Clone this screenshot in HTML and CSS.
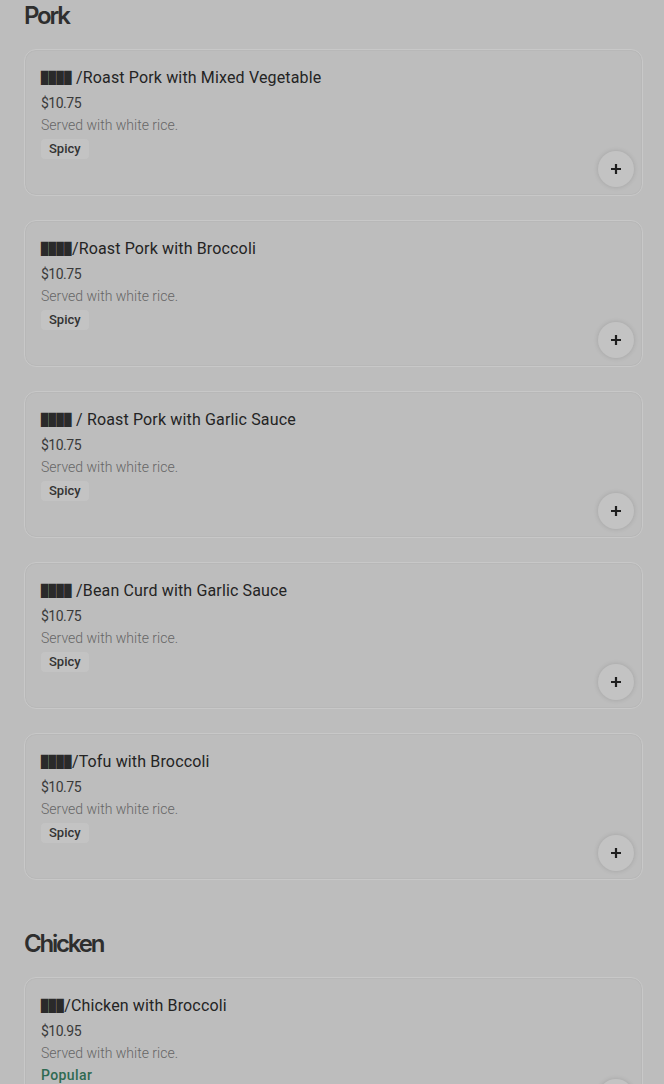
FILE: index.html
```html
<!DOCTYPE html>
<html lang="en">
<head>
<meta charset="utf-8">
<title>Menu</title>
<link rel="stylesheet" href="styles.css">
</head>
<body>
<main class="menu">
  <section class="category">
    <h2 class="category-title">Pork</h2>
    <div class="items">
      <article class="item">
        <div class="item-info">
          <h3 class="item-name"><span class="tofu">████</span> /Roast Pork with Mixed Vegetable</h3>
          <p class="item-price">$10.75</p>
          <p class="item-desc">Served with white rice.</p>
          <span class="tag">Spicy</span>
        </div>
        <button class="add-btn" aria-label="Add"><svg viewBox="0 0 12 12" width="12" height="12"><path d="M6 1v10M1 6h10" stroke="currentColor" stroke-width="2.2" fill="none"/></svg></button>
      </article>
      <article class="item">
        <div class="item-info">
          <h3 class="item-name"><span class="tofu">████</span>/Roast Pork with Broccoli</h3>
          <p class="item-price">$10.75</p>
          <p class="item-desc">Served with white rice.</p>
          <span class="tag">Spicy</span>
        </div>
        <button class="add-btn" aria-label="Add"><svg viewBox="0 0 12 12" width="12" height="12"><path d="M6 1v10M1 6h10" stroke="currentColor" stroke-width="2.2" fill="none"/></svg></button>
      </article>
      <article class="item">
        <div class="item-info">
          <h3 class="item-name"><span class="tofu">████</span> / Roast Pork with Garlic Sauce</h3>
          <p class="item-price">$10.75</p>
          <p class="item-desc">Served with white rice.</p>
          <span class="tag">Spicy</span>
        </div>
        <button class="add-btn" aria-label="Add"><svg viewBox="0 0 12 12" width="12" height="12"><path d="M6 1v10M1 6h10" stroke="currentColor" stroke-width="2.2" fill="none"/></svg></button>
      </article>
      <article class="item">
        <div class="item-info">
          <h3 class="item-name"><span class="tofu">████</span> /Bean Curd with Garlic Sauce</h3>
          <p class="item-price">$10.75</p>
          <p class="item-desc">Served with white rice.</p>
          <span class="tag">Spicy</span>
        </div>
        <button class="add-btn" aria-label="Add"><svg viewBox="0 0 12 12" width="12" height="12"><path d="M6 1v10M1 6h10" stroke="currentColor" stroke-width="2.2" fill="none"/></svg></button>
      </article>
      <article class="item">
        <div class="item-info">
          <h3 class="item-name"><span class="tofu">████</span>/Tofu with Broccoli</h3>
          <p class="item-price">$10.75</p>
          <p class="item-desc">Served with white rice.</p>
          <span class="tag">Spicy</span>
        </div>
        <button class="add-btn" aria-label="Add"><svg viewBox="0 0 12 12" width="12" height="12"><path d="M6 1v10M1 6h10" stroke="currentColor" stroke-width="2.2" fill="none"/></svg></button>
      </article>
    </div>
  </section>
  <section class="category">
    <h2 class="category-title">Chicken</h2>
    <div class="items">
      <article class="item">
        <div class="item-info">
          <h3 class="item-name"><span class="tofu">███</span>/Chicken with Broccoli</h3>
          <p class="item-price">$10.95</p>
          <p class="item-desc">Served with white rice.</p>
          <span class="popular">Popular</span>
        </div>
        <button class="add-btn" aria-label="Add"><svg viewBox="0 0 12 12" width="12" height="12"><path d="M6 1v10M1 6h10" stroke="currentColor" stroke-width="2.2" fill="none"/></svg></button>
      </article>
    </div>
  </section>
</main>
</body>
</html>
```

FILE: styles.css
```css
html, body {
  margin: 0;
  padding: 0;
  background: #bdbdbd;
  font-family: Roboto, "Liberation Sans", sans-serif;
  color: #2b2b2b;
}

.menu {
  display: flex;
  flex-direction: column;
  gap: 48px;
  padding: 0 21px 40px 24px;
}

.category-title {
  margin: 0 0 17px;
  font-family: Inter, Roboto, sans-serif;
  font-size: 24px;
  line-height: 32px;
  font-weight: 600;
  letter-spacing: -2.2px;
  color: #2e2e2e;
}

.items {
  display: flex;
  flex-direction: column;
  gap: 24px;
}

.item {
  box-sizing: border-box;
  min-height: 147px;
  display: grid;
  grid-template-columns: 1fr auto;
  padding: 16px 8px 8px 16px;
  border: 1px solid #c8c8c8;
  border-radius: 12px;
  box-shadow: inset 0 0 0 1px #b8b8b8;
  background: #bdbdbd;
}

.item-info {
  display: flex;
  flex-direction: column;
  align-items: flex-start;
}

.item-name {
  margin: 0;
  font-size: 16px;
  line-height: 24px;
  font-weight: 400;
  letter-spacing: 0.15px;
  color: #242424;
}

.tofu {
  font-family: "DejaVu Sans Mono", monospace;
  font-size: 12px;
  letter-spacing: 0.5px;
  color: #2a2a2a;
  vertical-align: 1px;
}

.item-price {
  margin: 3px 0 0;
  font-size: 14px;
  line-height: 20px;
  color: #3a3a3a;
  letter-spacing: -0.5px;
}

.item-desc {
  margin: 2px 0 0;
  font-size: 14px;
  line-height: 20px;
  font-weight: 300;
  color: #666;
  letter-spacing: 0;
}

.tag {
  margin-top: 4px;
  padding: 0 8px;
  height: 20px;
  line-height: 20px;
  font-size: 13px;
  font-weight: 500;
  color: #333;
  background: #c3c3c3;
  border-radius: 4px;
}

.popular {
  margin-top: 2px;
  font-size: 14px;
  line-height: 20px;
  font-weight: 500;
  letter-spacing: 0.4px;
  color: #2f6a52;
}

.add-btn {
  align-self: end;
  width: 36px;
  height: 36px;
  padding: 0;
  border: none;
  border-radius: 50%;
  background: #c3c3c3;
  color: #1f1f1f;
  box-shadow: 0 0 5px rgba(0, 0, 0, 0.14);
  display: flex;
  align-items: center;
  justify-content: center;
}
```
